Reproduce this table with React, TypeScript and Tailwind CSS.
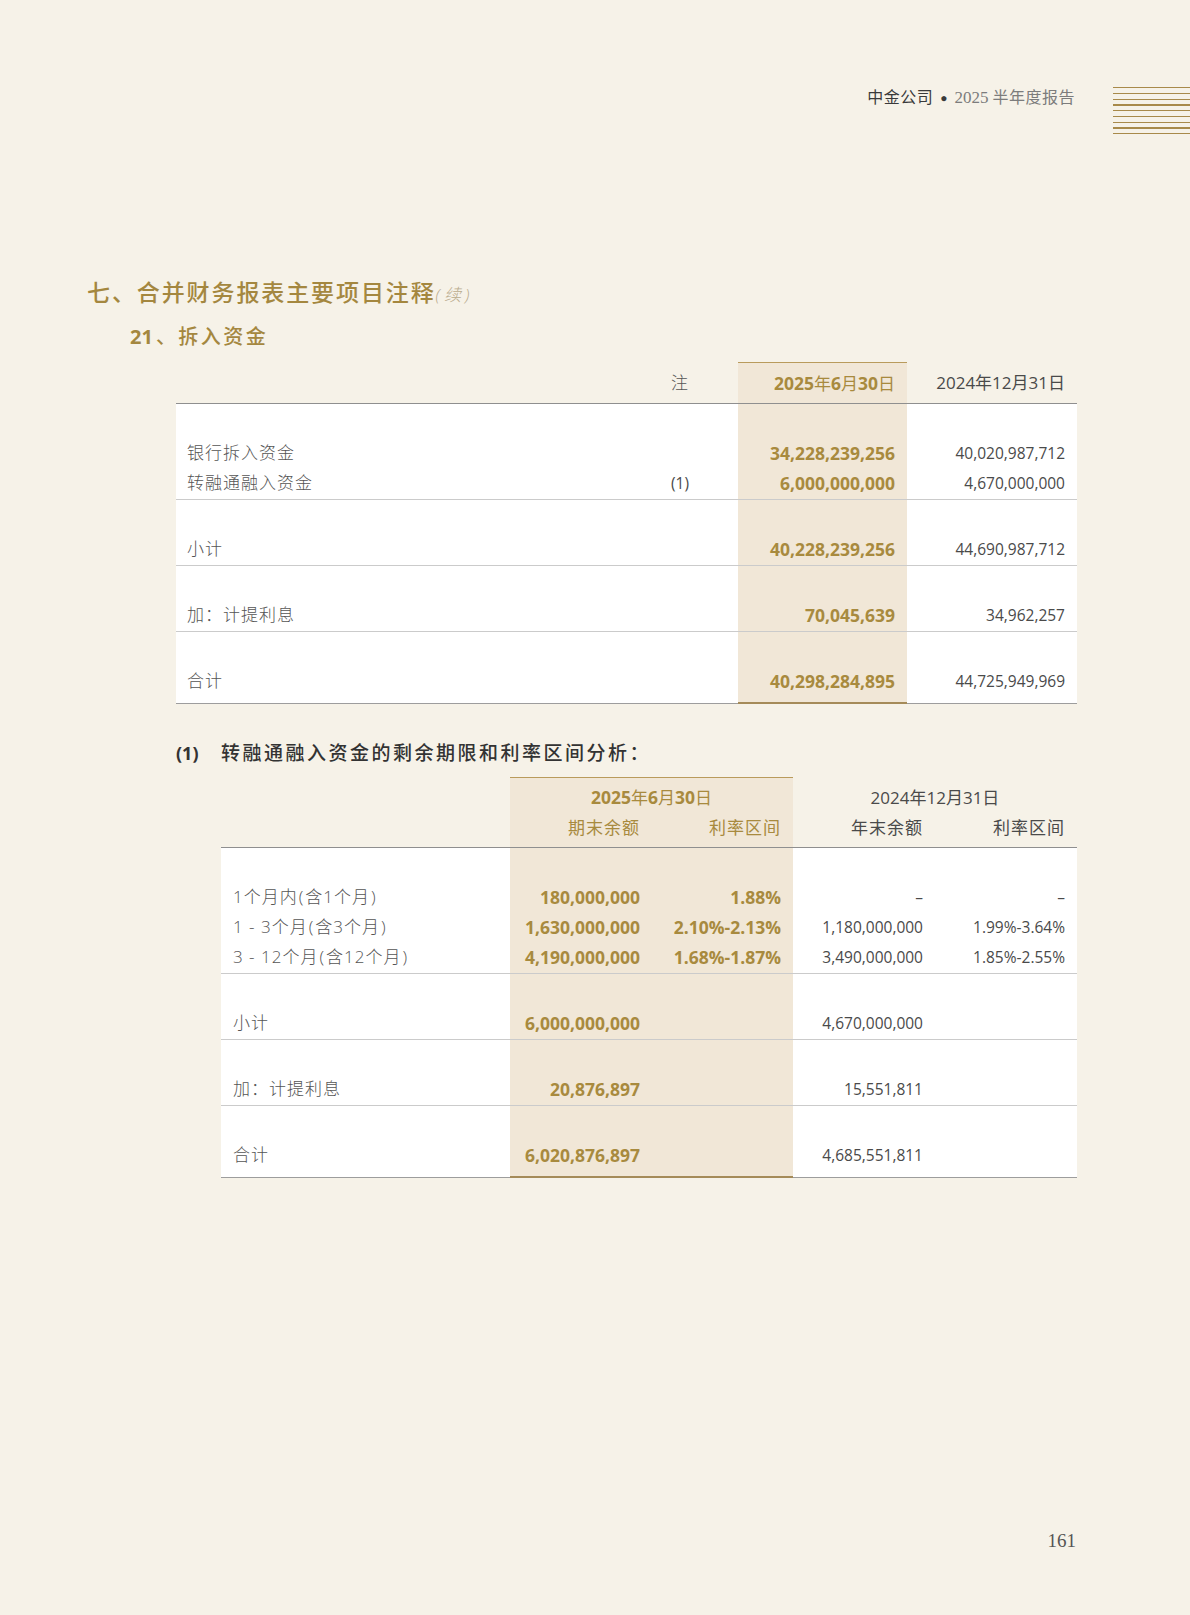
import type { ReactNode } from "react";

const sans = "font-['Open_Sans','Noto_Sans_CJK_SC',sans-serif]";
const serif = "font-['Liberation_Serif','Noto_Sans_CJK_SC',serif]";

const label = "text-[17px] tracking-[1px] font-light text-[#555]";
const num = "text-[15.5px] text-[#4a4a4a]";
const gold = "text-[17.5px] font-bold text-[#a88a3e]";
const hl = "bg-[#f1e7d7]";

// narrow brackets, the report sets them tighter than full width ones
function P({ c }: { c: string }) {
  return <span className="mx-[1px]">{c}</span>;
}

type Row1 = [ReactNode, string, string, string];
type Row2 = [ReactNode, string, string, string, string];

const table1: Row1[][] = [
  [
    ["银行拆入资金", "", "34,228,239,256", "40,020,987,712"],
    ["转融通融入资金", "(1)", "6,000,000,000", "4,670,000,000"],
  ],
  [["小计", "", "40,228,239,256", "44,690,987,712"]],
  [["加：计提利息", "", "70,045,639", "34,962,257"]],
  [["合计", "", "40,298,284,895", "44,725,949,969"]],
];

const table2: Row2[][] = [
  [
    [<>1个月内<P c="(" />含1个月<P c=")" /></>, "180,000,000", "1.88%", "–", "–"],
    [<>1 - 3个月<P c="(" />含3个月<P c=")" /></>, "1,630,000,000", "2.10%-2.13%", "1,180,000,000", "1.99%-3.64%"],
    [<>3 - 12个月<P c="(" />含12个月<P c=")" /></>, "4,190,000,000", "1.68%-1.87%", "3,490,000,000", "1.85%-2.55%"],
  ],
  [["小计", "6,000,000,000", "", "4,670,000,000", ""]],
  [["加：计提利息", "20,876,897", "", "15,551,811", ""]],
  [["合计", "6,020,876,897", "", "4,685,551,811", ""]],
];

// one column of a block: blank space on top, then 30px rows
function Lines({ items, className }: { items: ReactNode[]; className: string }) {
  return (
    <div className={className}>
      {items.map((t, i) => (
        <div key={i} className="h-[30px] leading-[30px] whitespace-nowrap">
          {t}
        </div>
      ))}
    </div>
  );
}

function GoldDate() {
  return (
    <span className="font-bold text-[#a88a3e]">
      <span className="text-[17.5px]">2025</span>
      <span className="font-normal text-[17px]">年</span>
      <span className="text-[17.5px]">6</span>
      <span className="font-normal text-[17px]">月</span>
      <span className="text-[17.5px]">30</span>
      <span className="font-normal text-[17px]">日</span>
    </span>
  );
}

function Header() {
  return (
    <div className="flex justify-end items-start pt-[87px]">
      <div className={`${serif} leading-[22px] flex items-center mr-[38px]`}>
        <span className="text-[16px] tracking-[0.5px] text-[#3a3a3a]">中金公司</span>
        <span className="mx-[7px] text-[12px] text-[#3a3a3a]">●</span>
        <span className="text-[17px] text-[#7c7c7c]">2025</span>
        <span className="ml-[4px] text-[16px] tracking-[0.5px] text-[#7c7c7c]">半年度报告</span>
      </div>
      <div className="w-[77px] flex flex-col gap-[4.5px]">
        {Array.from({ length: 9 }).map((_, i) => (
          <div key={i} className="h-[1.25px] bg-[#a88a4a]" />
        ))}
      </div>
    </div>
  );
}

function Table1() {
  return (
    <div className={`${sans} ml-[176px] mt-[11px] w-[901px]`}>
      <div className="flex h-[42px] border-b border-[#8f8f8f]">
        <div className="w-[474px]" />
        <div className={`w-[60px] flex items-center justify-center ${label}`}>注</div>
        <div className="w-[28px]" />
        <div className={`w-[169px] ${hl} border-t border-[#b99b5c] flex items-center justify-end pr-[12px]`}>
          <GoldDate />
        </div>
        <div className="w-[170px] flex items-center justify-end pr-[12px] text-[17px] text-[#4a4a4a]">
          2024年12月31日
        </div>
      </div>
      {table1.map((block, bi) => {
        const last = bi === table1.length - 1;
        const pad = last ? "pt-[34px] pb-[6px]" : "pt-[34px] pb-[1px]";
        const line = last ? "border-b border-[#9d9d9d]" : "border-b border-[#cbcbcb]";
        const hlLine = last ? "border-b-2 border-[#a58b59]" : "border-b border-[#cbcbcb]";
        return (
          <div key={bi} className="flex bg-white">
            <Lines items={block.map((r) => r[0])} className={`w-[474px] pl-[11px] ${pad} ${label} ${line}`} />
            <Lines items={block.map((r) => r[1])} className={`w-[60px] text-center ${pad} ${num} ${line}`} />
            <div className={`w-[28px] ${line}`} />
            <Lines items={block.map((r) => r[2])} className={`w-[169px] ${hl} pr-[12px] text-right ${pad} ${gold} ${hlLine}`} />
            <Lines items={block.map((r) => r[3])} className={`w-[170px] pr-[12px] text-right ${pad} ${num} ${line}`} />
          </div>
        );
      })}
    </div>
  );
}

function Table2() {
  return (
    <div className={`${sans} ml-[221px] mt-[11px] w-[856px]`}>
      <div className="flex h-[71px] border-b border-[#8f8f8f]">
        <div className="w-[289px]" />
        <div className={`w-[283px] ${hl} border-t border-[#b99b5c] pt-[4px]`}>
          <div className="h-[30px] flex items-center justify-center">
            <GoldDate />
          </div>
          <div className="h-[30px] flex text-[17px] tracking-[1px] text-[#a88a3e]">
            <div className="w-[142px] flex items-center justify-end pr-[12px]">期末余额</div>
            <div className="w-[141px] flex items-center justify-end pr-[12px]">利率区间</div>
          </div>
        </div>
        <div className="w-[284px] pt-[5px] text-[17px] text-[#4a4a4a]">
          <div className="h-[30px] flex items-center justify-center">2024年12月31日</div>
          <div className="h-[30px] flex tracking-[1px]">
            <div className="w-[142px] flex items-center justify-end pr-[12px]">年末余额</div>
            <div className="w-[142px] flex items-center justify-end pr-[12px]">利率区间</div>
          </div>
        </div>
      </div>
      {table2.map((block, bi) => {
        const last = bi === table2.length - 1;
        const pad = last ? "pt-[34px] pb-[6px]" : "pt-[34px] pb-[1px]";
        const line = last ? "border-b border-[#9d9d9d]" : "border-b border-[#cbcbcb]";
        const hlLine = last ? "border-b-2 border-[#a58b59]" : "border-b border-[#cbcbcb]";
        return (
          <div key={bi} className="flex bg-white">
            <Lines items={block.map((r) => r[0])} className={`w-[289px] pl-[12px] ${pad} ${label} ${line}`} />
            <Lines items={block.map((r) => r[1])} className={`w-[142px] ${hl} pr-[12px] text-right ${pad} ${gold} ${hlLine}`} />
            <Lines items={block.map((r) => r[2])} className={`w-[141px] ${hl} pr-[12px] text-right ${pad} ${gold} ${hlLine}`} />
            <Lines items={block.map((r) => r[3])} className={`w-[142px] pr-[12px] text-right ${pad} ${num} ${line}`} />
            <Lines items={block.map((r) => r[4])} className={`w-[142px] pr-[12px] text-right ${pad} ${num} ${line}`} />
          </div>
        );
      })}
    </div>
  );
}

export default function App() {
  return (
    <div className="w-[1190px] h-[1615px] bg-[#f6f2e8] flex flex-col">
      <Header />
      <h1 className={`${sans} mt-[143px] pl-[87px] h-[30px] leading-[30px] text-[23px] tracking-[1.9px] font-medium text-[#a4873f]`}>
        七、合并财务报表主要项目注释
        <span className="text-[17px] italic font-light tracking-[4px] text-[#b9ab8c]">(续)</span>
      </h1>
      <h2 className={`${sans} mt-[16px] pl-[130px] h-[28px] leading-[28px] text-[#a4873f]`}>
        <span className="text-[20px] font-bold">21</span>
        <span className="ml-[3px] text-[20px] tracking-[2.5px] font-medium">、拆入资金</span>
      </h2>
      <Table1 />
      <div className={`${sans} mt-[36px] pl-[176px] h-[26px] flex items-center text-[#333]`}>
        <span className="w-[45px] text-[18px] font-bold">(1)</span>
        <span className="text-[19px] tracking-[2.5px] font-medium">转融通融入资金的剩余期限和利率区间分析：</span>
      </div>
      <Table2 />
      <div className={`${serif} mt-auto pb-[62px] pr-[114px] text-right text-[19px] leading-[24px] text-[#555]`}>
        161
      </div>
    </div>
  );
}
